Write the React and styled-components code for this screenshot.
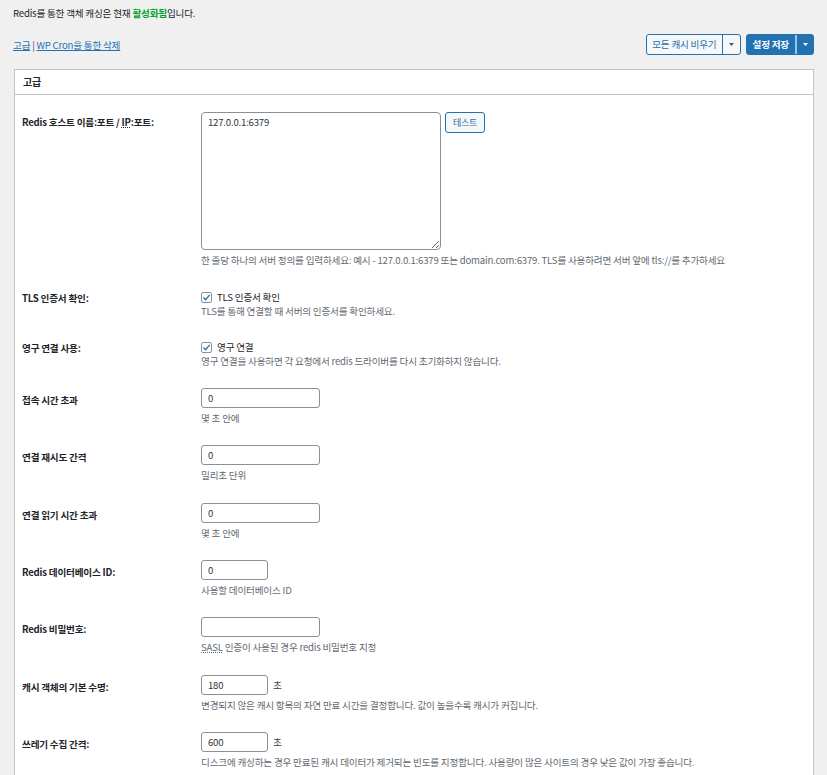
import React from 'react';
import styled, { createGlobalStyle } from 'styled-components';

const GlobalStyle = createGlobalStyle`
  body {
    margin: 0;
    background: #f0f0f1;
    color: #3c434a;
    font-family: "Noto Sans CJK KR", "Noto Sans", sans-serif;
    font-size: 9.6px;
    line-height: 14px;
    letter-spacing: -0.2px;
  }
  * { box-sizing: border-box; }
  button, input, textarea { letter-spacing: inherit; }
`;

const Page = styled.div`
  padding: 6px 13px 0 13px;
`;

const Notice = styled.p`
  margin: 0;
  color: #1d2327;
  strong {
    color: #00a32a;
    font-weight: 700;
  }
`;

const Toolbar = styled.div`
  display: flex;
  align-items: center;
  justify-content: space-between;
  margin-top: 14px;
  height: 21px;
`;

const TabLinks = styled.div`
  color: #3c434a;
  a {
    color: #2271b1;
    text-decoration: underline;
  }
`;

const ButtonBar = styled.div`
  display: flex;
  gap: 5px;
`;

const SplitButton = styled.div`
  display: flex;
  height: 21px;
  border-radius: 3px;
  overflow: hidden;
  border: 1px solid #2271b1;
  background: ${(p) => (p.$primary ? '#2271b1' : '#f6f7f7')};
`;

const SplitMain = styled.button`
  border: none;
  margin: 0;
  padding: 0 ${(p) => (p.$primary ? 6 : 5)}px;
  background: transparent;
  font: inherit;
  font-weight: ${(p) => (p.$primary ? 600 : 400)};
  color: ${(p) => (p.$primary ? '#fff' : '#2271b1')};
  line-height: 19px;
`;

const SplitToggle = styled.button`
  width: 18px;
  border: none;
  margin: 0;
  padding: 0;
  display: flex;
  align-items: center;
  justify-content: center;
  background: transparent;
  border-left: ${(p) => (p.$primary ? '2px solid #9ec2e6' : '1px solid #2271b1')};
  color: ${(p) => (p.$primary ? '#fff' : '#50575e')};
`;

const Caret = () => (
  <svg width="5" height="3" viewBox="0 0 5 3">
    <path d="M0 0 H5 L2.5 3 Z" fill="currentColor" />
  </svg>
);

const Panel = styled.div`
  margin: 14px 0 0 1px;
  background: #fff;
  border: 1px solid #c3c4c7;
`;

const PanelHeader = styled.h2`
  margin: 0;
  height: 25px;
  padding: 0 8px;
  border-bottom: 1px solid #c3c4c7;
  font-size: 10px;
  font-weight: 700;
  line-height: 24px;
  color: #1d2327;
`;

const FormTable = styled.div`
  padding: 6px 0 0 7px;
`;

const Row = styled.div`
  display: grid;
  grid-template-columns: 179px 1fr;
  padding-bottom: ${(p) => p.$bottom}px;
`;

const Label = styled.div`
  padding-top: ${(p) => p.$top}px;
  font-weight: 600;
  color: #1d2327;
  abbr {
    text-decoration: underline dotted;
  }
`;

const Field = styled.div`
  padding-top: ${(p) => p.$top}px;
`;

const Inline = styled.div`
  display: flex;
  align-items: ${(p) => (p.$center ? 'center' : 'flex-start')};
  gap: ${(p) => p.$gap || 4}px;
`;

const Description = styled.p`
  margin: ${(p) => (p.$flush ? 0 : 3)}px 0 0;
  color: #646970;
  abbr {
    text-decoration: underline dotted;
  }
`;

const HostArea = styled.textarea`
  width: 240px;
  height: 138px;
  margin: 0;
  padding: 2px 6px;
  border: 1px solid #8c8f94;
  border-radius: 4px;
  font: inherit;
  color: #2c3338;
`;

const SmallButton = styled.button`
  width: 40px;
  height: 21px;
  padding: 0;
  border: 1px solid #2271b1;
  border-radius: 3px;
  background: #f6f7f7;
  color: #2271b1;
  font: inherit;
  font-size: 9px;
`;

const TextInput = styled.input`
  width: ${(p) => (p.$small ? 67 : 119)}px;
  height: 20px;
  margin: 0;
  padding: 0 6px;
  border: 1px solid #8c8f94;
  border-radius: 3px;
  font: inherit;
  color: #2c3338;
`;

const Unit = styled.span`
  color: #3c434a;
`;

const CheckLine = styled.label`
  display: flex;
  align-items: center;
  gap: 5px;
  height: 14px;
  color: #1d2327;
`;

const CheckBox = styled.span`
  width: 11px;
  height: 11px;
  border: 1px solid #8c8f94;
  border-radius: 2px;
  background: #fff;
  display: flex;
  align-items: center;
  justify-content: center;
`;

const Checked = () => (
  <CheckBox>
    <svg width="9" height="9" viewBox="0 0 9 9">
      <path d="M1.5 4.6 L3.6 6.7 L7.7 1.9" fill="none" stroke="#2271b1" strokeWidth="1.4" />
    </svg>
  </CheckBox>
);

const inputRows = [
  { label: '접속 시간 초과', value: '0', desc: '몇 초 안에' },
  { label: '연결 재시도 간격', value: '0', desc: '밀리초 단위' },
  { label: '연결 읽기 시간 초과', value: '0', desc: '몇 초 안에' },
  { label: 'Redis 데이터베이스 ID:', value: '0', small: true, desc: '사용할 데이터베이스 ID' },
  {
    label: 'Redis 비밀번호:',
    value: '',
    desc: (
      <>
        <abbr title="Simple Authentication and Security Layer">SASL</abbr> 인증이 사용된 경우 redis 비밀번호 지정
      </>
    ),
  },
  {
    label: '캐시 객체의 기본 수명:',
    value: '180',
    small: true,
    unit: '초',
    desc: '변경되지 않은 캐시 항목의 자연 만료 시간을 결정합니다. 값이 높을수록 캐시가 커집니다.',
  },
  {
    label: '쓰레기 수집 간격:',
    value: '600',
    small: true,
    unit: '초',
    desc: '디스크에 캐싱하는 경우 만료된 캐시 데이터가 제거되는 빈도를 지정합니다. 사용량이 많은 사이트의 경우 낮은 값이 가장 좋습니다.',
  },
];

const checkRows = [
  { label: 'TLS 인증서 확인:', text: 'TLS 인증서 확인', desc: 'TLS를 통해 연결할 때 서버의 인증서를 확인하세요.' },
  { label: '영구 연결 사용:', text: '영구 연결', desc: '영구 연결을 사용하면 각 요청에서 redis 드라이버를 다시 초기화하지 않습니다.' },
];

export default function App() {
  return (
    <>
      <GlobalStyle />
      <Page>
        <Notice>
          Redis를 통한 객체 캐싱은 현재 <strong>활성화됨</strong>입니다.
        </Notice>
        <Toolbar>
          <TabLinks>
            <a href="#advanced">고급</a> | <a href="#cron">WP Cron을 통한 삭제</a>
          </TabLinks>
          <ButtonBar>
            <SplitButton>
              <SplitMain>모든 캐시 비우기</SplitMain>
              <SplitToggle><Caret /></SplitToggle>
            </SplitButton>
            <SplitButton $primary>
              <SplitMain $primary>설정 저장</SplitMain>
              <SplitToggle $primary><Caret /></SplitToggle>
            </SplitButton>
          </ButtonBar>
        </Toolbar>

        <Panel>
          <PanelHeader>고급</PanelHeader>
          <FormTable>
            <Row $bottom={10}>
              <Label $top={14}>
                Redis 호스트 이름:포트 / <abbr title="Internet Protocol">IP</abbr>:포트:
              </Label>
              <Field $top={11}>
                <Inline>
                  <HostArea defaultValue="127.0.0.1:6379" />
                  <SmallButton>테스트</SmallButton>
                </Inline>
                <Description>
                  한 줄당 하나의 서버 정의를 입력하세요: 예시 - 127.0.0.1:6379 또는 domain.com:6379. TLS를 사용하려면 서버 앞에 tls://를 추가하세요
                </Description>
              </Field>
            </Row>

            {checkRows.map((row) => (
              <Row key={row.label} $bottom={9}>
                <Label $top={14}>{row.label}</Label>
                <Field $top={13}>
                  <CheckLine>
                    <Checked />
                    {row.text}
                  </CheckLine>
                  <Description $flush>{row.desc}</Description>
                </Field>
              </Row>
            ))}

            {inputRows.map((row) => (
              <Row key={row.label} $bottom={9.33}>
                <Label $top={16}>{row.label}</Label>
                <Field $top={11}>
                  <Inline $center $gap={5}>
                    <TextInput $small={row.small} defaultValue={row.value} />
                    {row.unit && <Unit>{row.unit}</Unit>}
                  </Inline>
                  <Description>{row.desc}</Description>
                </Field>
              </Row>
            ))}
          </FormTable>
        </Panel>
      </Page>
    </>
  );
}
